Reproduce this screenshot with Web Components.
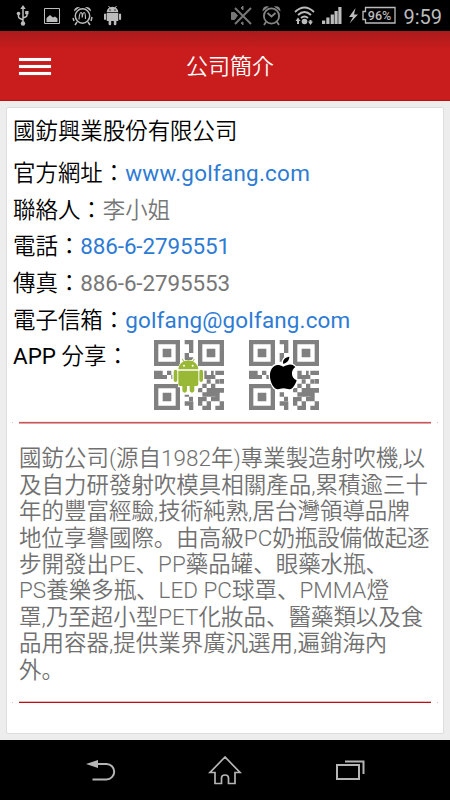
<!DOCTYPE html>
<html lang="ja"><head><meta charset="utf-8"><title>公司簡介</title>
<style>
html,body{margin:0;height:100%;background:#ededed}
body{font-family:Roboto,"Noto Sans CJK JP","Noto Sans CJK TC",sans-serif;font-size:22.45px;font-weight:350;color:#000}
</style></head><body>
<company-app></company-app>
<script>
function element(name, html){
  const t=document.createElement('template');t.innerHTML=html;
  customElements.define(name,class extends HTMLElement{
    constructor(){super();this.attachShadow({mode:'open'}).append(t.content.cloneNode(true));}
  });
}
element('status-bar',`<style>
:host{display:block;height:31px;background:#000}
svg{display:block}text{font-family:Roboto,sans-serif;fill:#bcbcbc}
</style><svg width="450" height="31" viewBox="0 0 450 31" fill="#bcbcbc" stroke="none">
<g stroke="#bcbcbc" fill="none" stroke-width="1.5"><path d="M23 8v15M18.500 14v2.500q0 1.500 1.500 2l3 1.500M27 12v3q0 1.500-1.500 2l-2.500 1"/></g>
<path d="M23 5l-2.700 4h5.400zM25.200 11h3.300v3.300h-3.300z"/><circle cx="18.500" cy="13.500" r="1.800"/><circle cx="23" cy="23.500" r="2.200"/>
<path d="M44.500 8.500h15v15h-15z" fill="none" stroke="#bcbcbc"/><path d="M46.500 22v-4l3.500-3 3 2.500 2-1 2.500 2v3.500z"/>
<g fill="none" stroke="#bcbcbc" stroke-width="1.500"><circle cx="82.500" cy="16" r="7.200"/><path d="M79 19.500q.500-7 2-7t1.200 5q.700-5 2-5t1.300 6.500" stroke-width="1.200"/><path d="M77 22l-2 3M88 22l2 3M73 18l1 3M92 17l-1 4"/></g><path d="M74 11.500q0-5 6-4.500zM91 11.500q0-5-6-4.500z"/>
<path d="M106.700 12.200a5.800 5.500 0 0 1 11.600 0zM106.700 13h11.600v8h-1.900v3a1.300 1.300 0 0 1-2.600 0v-3h-2.600v3a1.300 1.300 0 0 1-2.600 0v-3h-1.900zM104 14.300a1.100 1.100 0 0 1 2.100 0v5a1.100 1.100 0 0 1-2.100 0zM119 14.300a1.100 1.100 0 0 1 2.100 0v5a1.100 1.100 0 0 1-2.100 0z"/><path d="M108.500 6l2 2.500M116.500 6l-2 2.500" stroke="#bcbcbc"/><circle cx="110" cy="10" r=".7" fill="#000"/><circle cx="115" cy="10" r=".7" fill="#000"/>
<g fill="#777" stroke="#777"><path d="M231.500 12.500h3l3 3-3 4h-3z"/><path d="M241 8l2-2v4zM241 23l2 2v-3z"/><path d="M235 8l16 16M251 8l-16 16" stroke-width="2"/></g>
<g fill="none" stroke="#858585" stroke-width="1.800"><circle cx="271.500" cy="16" r="7.600"/><path d="M267.500 13l4 3.500 4-3.500M266 22l-2 3M277 22l2 3"/></g><path d="M262.500 11.500q0-6 6.500-5zM280.500 11.500q0-6-6.500-5z" fill="#858585"/>
<g fill="none" stroke="#bcbcbc" stroke-width="1.900"><path d="M295 12q9.500-9 19 0M298 15q6.500-6 13 0M301 18q3.500-3 7 0"/></g>
<circle cx="304.500" cy="21.500" r="2.800"/><path d="M297 20h2v4h-2zM309.500 20h2v4h-2zM295.500 21l2.500-3.500 2.500 3.500zM308 21.500h5l-2.500 3.500z"/>
<path d="M322 20.500h3.200V24H322zM326.300 17.500h3.200V24h-3.200zM330.700 14.500h3.200V24h-3.200zM334.500 11h3.200V24h-3.200zM338.300 7h3.200v17h-3.200z"/>
<path d="M355.500 8l-6.500 9h4l-3.500 6.500 8.500-9h-4z"/>
<path d="M365.500 7.500h29.500v15.500h-29.500v-3.500h-2.500v-8h2.500z" fill="none" stroke="#bcbcbc" stroke-width="1.300"/>
<text x="367.800" y="19.500" font-size="12" font-weight="500" textLength="23.500" lengthAdjust="spacingAndGlyphs">96%</text>
<text x="403.500" y="23.500" font-size="20.500" font-weight="400" textLength="38.500" lengthAdjust="spacingAndGlyphs">9:59</text></svg>`);
element('title-bar',`<style>
:host{display:grid;grid-template-columns:1fr auto 1fr;align-items:center;height:70px;box-sizing:border-box;background:linear-gradient(#a91b1c,#c91c1d 18px);border-bottom:1px solid #bf0e10;color:#fff;font-size:22px;}
.menu{display:grid;gap:4px;width:32px;margin-left:19px;margin-top:1px}.menu i{height:3px;background:#fff;box-shadow:0 0 1px #fff8}
h1{font:inherit;margin:2px 0 0 10px;line-height:30px}
</style><div class="menu"><i></i><i></i><i></i></div><h1><slot></slot></h1>`);
element('info-row',`<style>
:host{display:flex;height:36.65px;line-height:36.650px;white-space:pre;color:#000}
::slotted(span){color:#777}::slotted(a){color:#2d7bd4;text-decoration:none}
</style><slot></slot>`);
element('red-rule',`<style>
:host{display:flex;gap:6px;height:1px;margin:0 5px;--c:#cf5558}
:host([strong]){--c:#bd1014}
i{width:1px;background:#e9b5b5}b{flex:1;background:var(--c);box-shadow:0 1px #dda4a5,0 -1px #f3e7e7}
:host([strong]) b{box-shadow:0 -1px #e3bbbb}
</style><i></i><b></b><i></i>`);
const qr=`<style>:host{display:block;width:70px;height:70px}svg{display:block;overflow:visible}</style>
<svg width="70" height="70" viewBox="0 0 210 210"><g fill="#808080">
<path fill-rule="evenodd" d="M0 0h78v78H0zM13 13v52h52V13zM132 0h78v78h-78zM145 13v52h52V13zM0 132h78v78H0zM13 145v52h52v-52z"/>
<path d="M26 26h26v26H26zM158 26h26v26h-26zM26 158h26v26H26z"/>
<path d="M92 0h26v39H105V13H92zM92 39h13v13h13v13H92zM0 92h26v13h13v12H0zM39 92h13v13H39zM52 105h13v12H52zM66 92h12v13H66zM184 92h26v13h-26zM145 92h13v25h-13zM158 105h26v12h-26zM171 92h8v13h-8zM197 117h13v14h-13zM158 118h12v13h-12zM184 118h12v13h-12zM145 131h13v13h-13zM132 144h13v13h-13zM145 157h13v13h-13zM158 144h40v13h-13v13h-27zM171 131h13v13h-13zM92 157h13v13H92zM105 170h12v13h-12zM92 184h26v26h-13v-13H92zM132 171h26v13h-26zM132 184h13v13h-13zM145 197h26v13h-26zM158 184h13v13h-13zM171 171h13v13h-13zM184 157h13v27h-13zM197 144h13v14h-13zM197 184h13v26h-26v-13h13z"/></g>`;
element('android-qr',qr+`<g transform="translate(103 103)"><path d="M-32-15l5-15 10-9-4-9 4-3 7 8H10l7-8 4 3-4 9 10 9 5 15 11-2 5 7v29l-5 7-12-2v19H19v18H-19V39h-12V20l-12 2-5-7v-29l5-7z" fill="#fff"/><path fill="#99b936" d="M-30-15a30 27 0 0 1 60 0zM-30-11h60v41q0 5-5 5H18v13a7 7 0 0 1-14 0V35H-4v13a7 7 0 0 1-14 0V35H-25q-5 0-5-5zM-44-8a5.500 6 0 0 1 11 0v25a5.500 6 0 0 1-11 0zM33-8a5.500 6 0 0 1 11 0v25a5.500 6 0 0 1-11 0z"/><path d="M-18-46l6 10M18-46l-6 10" stroke="#99b936" stroke-width="3"/><circle cx="-13" cy="-26" r="3" fill="#fff"/><circle cx="13" cy="-26" r="3" fill="#fff"/></g></svg>`);
element('apple-qr',qr+`<path d="M103 80C88 71 76 74 68 86c-9 14-6 39 7 56 9 11 18 3 28 3 12 0 18 8 28-2 7-8 10-15 12-22-17-7-19-30-4-40-10-12-22-8-36-1zM102 71c-1-14 8-19 19-21 0 11-8 19-19 21z" fill="#000" stroke="#fff" stroke-width="8" stroke-linejoin="round" paint-order="stroke"/></svg>`);
element('company-card',`<style>
:host{display:block;box-sizing:border-box;margin:6px 6px 0;height:627px;background:#fff;border:1px solid #ddd;border-radius:2px}
h2{font:inherit;margin:5px 0 6px 6px;line-height:36px;height:36px}
.info{padding-left:6px}.share{display:flex;height:76px}.codes{display:flex;gap:25px;padding:2px 0 0}
.share info-row{width:141px}.share b{font-weight:400}
.site,.mail,.phone{font-weight:400}
.site{letter-spacing:.25px}.mail{letter-spacing:.17px}.phone{letter-spacing:-.12px}
p{margin:22px 0 0 12px;line-height:26.43px;color:#707070;height:238px}
p span{display:block;white-space:pre;width:max-content;letter-spacing:.04px}
red-rule[strong]{margin-top:19px}
</style>
<h2>國鈁興業股份有限公司</h2>
<div class="info">
<info-row>官方網址：<a class="site">www.golfang.com</a></info-row>
<info-row>聯絡人：<span>李小姐</span></info-row>
<info-row>電話：<a class="phone">886-6-2795551</a></info-row>
<info-row>傳真：<span class="phone">886-6-2795553</span></info-row>
<info-row>電子信箱：<a class="mail">golfang@golfang.com</a></info-row>
<div class="share"><info-row><b>APP </b>分享：</info-row><div class="codes"><android-qr></android-qr><apple-qr></apple-qr></div></div>
</div><red-rule style="margin-top:8px"></red-rule>
<p><span>國鈁公司(源自1982年)專業製造射吹機,以</span><span>及自力研發射吹模具相關產品,累積逾三十</span><span>年的豐富經驗,技術純熟,居台灣領導品牌</span><span>地位享譽國際。由高級PC奶瓶設備做起逐</span><span>步開發出PE、PP藥品罐、眼藥水瓶、</span><span>PS養樂多瓶、LED PC球罩、PMMA燈</span><span>罩,乃至超小型PET化妝品、醫藥類以及食</span><span>品用容器,提供業界廣汎選用,遍銷海內</span><span>外。</span></p>
<red-rule strong></red-rule>`);
element('nav-bar',`<style>:host{display:block;height:60px;background:#000}svg{display:block}</style>
<svg width="450" height="60" viewBox="0 0 450 60" fill="none" stroke="#b5b5b5" stroke-width="2"><path d="M97 24h9.500a7.700 7.700 0 0 1 0 15.400H92.500"/><path d="M86 24l12-4v8z" fill="#b5b5b5" stroke="none"/>
<path d="M225 17l-15 15.500h5V43.500h6.500V38q0-3 3.500-3t3.500 3v5.500h6.500V32.500h5z" stroke-width="1.700"/><path d="M337 25h22v14h-22zM345 21.500h18.500v12.500"/></svg>`);
element('company-app',`<style>:host{display:flex;flex-direction:column;height:800px;width:450px;overflow:hidden}status-bar,title-bar,company-card,nav-bar{flex-shrink:0}nav-bar{margin-top:auto}</style>
<status-bar></status-bar><title-bar>公司簡介</title-bar><company-card></company-card><nav-bar></nav-bar>`);
</script></body></html>
